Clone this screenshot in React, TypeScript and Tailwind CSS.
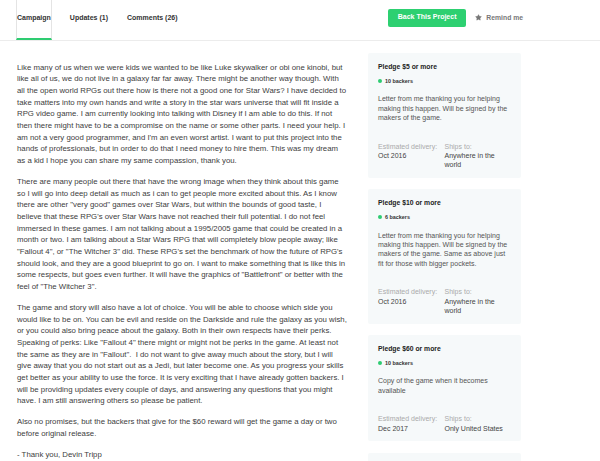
import React from 'react';
import { Star } from 'lucide-react';

type Reward = {
  amount: number;
  backers: number;
  description: string;
  delivery: string;
  shipsTo: string;
};

const rewards: Reward[] = [
  {
    amount: 5,
    backers: 10,
    description:
      'Letter from me thanking you for helping making this happen. Will be signed by the makers of the game.',
    delivery: 'Oct 2016',
    shipsTo: 'Anywhere in the world'
  },
  {
    amount: 10,
    backers: 6,
    description:
      'Letter from me thanking you for helping making this happen. Will be signed by the makers of the game. Same as above just fit for those with bigger pockets.',
    delivery: 'Oct 2016',
    shipsTo: 'Anywhere in the world'
  },
  {
    amount: 60,
    backers: 10,
    description: 'Copy of the game when it becomes available',
    delivery: 'Dec 2017',
    shipsTo: 'Only United States'
  }
];

const paragraphs = [
  "Like many of us when we were kids we wanted to be like Luke skywalker or obi one kinobi, but like all of us, we do not live in a galaxy far far away. There might be another way though. With all the open world RPGs out there how is there not a good one for Star Wars? I have decided to take matters into my own hands and write a story in the star wars universe that will fit inside a RPG video game. I am currently looking into talking with Disney if I am able to do this. If not then there might have to be a compromise on the name or some other parts. I need your help. I am not a very good programmer, and I'm an even worst artist. I want to put this project into the hands of professionals, but in order to do that I need money to hire them. This was my dream as a kid I hope you can share my same compassion, thank you.",
  'There are many people out there that have the wrong image when they think about this game so I will go into deep detail as much as i can to get people more excited about this. As I know there are other "very good" games over Star Wars, but within the bounds of good taste, I believe that these RPG\'s over Star Wars have not reached their full potential. I do not feel immersed in these games. I am not talking about a 1995/2005 game that could be created in a month or two. I am talking about a Star Wars RPG that will completely blow people away; like "Fallout 4", or "The Witcher 3" did. These RPG\'s set the benchmark of how the future of RPG\'s should look, and they are a good blueprint to go on. I want to make something that is like this in some respects, but goes even further. It will have the graphics of "Battlefront" or better with the feel of "The Witcher 3".',
  'The game and story will also have a lot of choice. You will be able to choose which side you would like to be on. You can be evil and reside on the Darkside and rule the galaxy as you wish, or you could also bring peace about the galaxy. Both in their own respects have their perks. Speaking of perks: Like "Fallout 4" there might or might not be perks in the game. At least not the same as they are in "Fallout".\u00a0 I do not want to give away much about the story, but I will give away that you do not start out as a Jedi, but later become one. As you progress your skills get better as your ability to use the force. It is very exciting that I have already gotten backers. I will be providing updates every couple of days, and answering any questions that you might have. I am still answering others so please be patient.',
  'Also no promises, but the backers that give for the $60 reward will get the game a day or two before original release.',
  '- Thank you, Devin Tripp'
];

const RewardCard: React.FC<{ reward: Reward }> = ({ reward }) => (
  <div className="rounded-[2px] bg-[#f6f9fa] px-[10px] pt-[9px] pb-[8.6px]">
    <h4 className="text-[6.8px] leading-[10px] font-bold text-[#222]">
      Pledge ${reward.amount} or more
    </h4>
    <div className="mt-[4px] flex items-center gap-[3px] leading-[10px]">
      <span className="h-[4px] w-[4px] rounded-full bg-[#2ecc71]" />
      <span className="text-[5.4px] font-bold text-[#333]">{reward.backers} backers</span>
    </div>
    <p className="mt-[8.3px] text-[7px] leading-[9.3px] text-[#555]">{reward.description}</p>
    <div className="mt-[19.4px] grid grid-cols-2 text-[7px] leading-[9.3px]">
      <div>
        <div className="text-[#aaa]">Estimated delivery:</div>
        <div className="text-[#444]">{reward.delivery}</div>
      </div>
      <div>
        <div className="text-[#aaa]">Ships to:</div>
        <div className="text-[#444]">{reward.shipsTo}</div>
      </div>
    </div>
  </div>
);

export default function App() {
  return (
    <div className="min-h-screen bg-white" style={{ fontFamily: '"Liberation Sans", Arial, sans-serif' }}>
      {/* Tabs + actions */}
      <div className="border-b border-[#ececec]">
        <div className="ml-[16px] flex h-[40px] w-[507px] justify-between">
          <nav className="flex h-full text-[7px] font-bold text-[#333]">
            <div className="flex items-center border-x border-b-2 border-x-[#e4e4e4] border-b-[#2ecc71] pb-[1px]">
              Campaign
            </div>
            <div className="ml-[18px] flex items-center pb-[4px]">Updates (1)</div>
            <div className="ml-[19px] flex items-center pb-[4px]">Comments (26)</div>
          </nav>
          <div className="flex items-start pt-[8.7px]">
            <button className="h-[18px] rounded-[2px] bg-[#2dd071] px-[9.4px] text-[7px] font-bold text-white">
              Back This Project
            </button>
            <button className="ml-[9px] flex h-[18px] items-center gap-[4.5px] text-[6.8px] font-bold text-[#777]">
              <Star className="h-[7px] w-[7px] fill-[#777] text-[#777]" strokeWidth={1} />
              Remind me
            </button>
          </div>
        </div>
      </div>

      {/* Body */}
      <div className="flex pt-[12px] pl-[17px]">
        <div className="mt-[8.5px] w-[331px] text-[7.8px] leading-[11.7px] text-[#404040]">
          {paragraphs.map((p, i) => (
            <p key={i} className="mb-[9px]">
              {p}
            </p>
          ))}
        </div>
        <div className="ml-[20px] flex w-[153px] flex-col gap-[11.3px]">
          {rewards.map((r) => (
            <RewardCard key={r.amount} reward={r} />
          ))}
          {/* next pledge, below the fold */}
          <div className="h-[40px] rounded-[2px] bg-[#f6f9fa]" />
        </div>
      </div>
    </div>
  );
}
